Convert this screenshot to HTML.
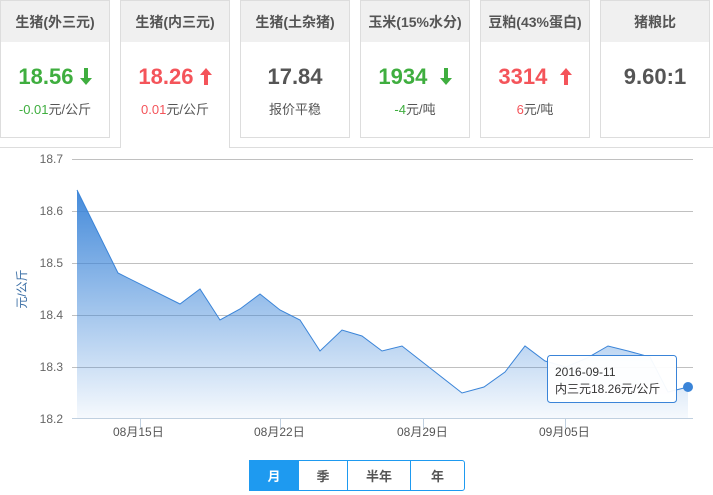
<!DOCTYPE html><html><head><meta charset="utf-8"><style>
body{margin:0;width:713px;height:495px;background:#fff;font-family:"Liberation Sans","Noto Sans CJK SC",sans-serif;position:relative;overflow:hidden}
.t{position:absolute;top:0;width:108px;height:136px;border:1px solid #ddd;background:#fff;text-align:center}
.t .h{height:41px;background:#f0f0f0;line-height:42px;font-size:14px;font-weight:bold;color:#555}
.t .v{margin-top:21px;font-size:22px;font-weight:bold;color:#555;height:28px;line-height:28px}
.t .s{margin-top:8px;font-size:13px;color:#555}
.t .g{color:#3fae3f}.t .r{color:#f4545a}
.act{height:147px;border-bottom:none}
.line{position:absolute;top:147px;height:1px;background:#ddd}
.btn{position:absolute;top:460px;height:31px;line-height:31px;text-align:center;font-size:13px;font-weight:bold;color:#555;border:1px solid #1e9af0;box-sizing:border-box}
svg.ar{vertical-align:-1px}
</style></head><body>
<div class="line" style="left:0;width:121px"></div><div class="line" style="left:229px;width:484px"></div>
<div class="t" style="left:0"><div class="h">生猪(外三元)</div><div class="v g">18.56 <svg class="ar" width="12" height="17" viewBox="0 0 12 17"><path d="M4 0h4v10h4L6 17 0 10h4z" fill="#3fae3f"/></svg></div><div class="s"><span class="g">-0.01</span>元/公斤</div></div>
<div class="t act" style="left:120px"><div class="h">生猪(内三元)</div><div class="v r">18.26 <svg class="ar" width="12" height="17" viewBox="0 0 12 17"><path d="M4 17h4V7h4L6 0 0 7h4z" fill="#f4545a"/></svg></div><div class="s"><span class="r">0.01</span>元/公斤</div></div>
<div class="t" style="left:240px"><div class="h">生猪(土杂猪)</div><div class="v">17.84</div><div class="s">报价平稳</div></div>
<div class="t" style="left:360px"><div class="h">玉米(15%水分)</div><div class="v g">1934 &nbsp;<svg class="ar" width="12" height="17" viewBox="0 0 12 17"><path d="M4 0h4v10h4L6 17 0 10h4z" fill="#3fae3f"/></svg></div><div class="s"><span class="g">-4</span>元/吨</div></div>
<div class="t" style="left:480px"><div class="h">豆粕(43%蛋白)</div><div class="v r">3314 &nbsp;<svg class="ar" width="12" height="17" viewBox="0 0 12 17"><path d="M4 17h4V7h4L6 0 0 7h4z" fill="#f4545a"/></svg></div><div class="s"><span class="r">6</span>元/吨</div></div>
<div class="t" style="left:600px"><div class="h">猪粮比</div><div class="v">9.60:1</div></div>
<svg width="713" height="495" style="position:absolute;left:0;top:0" font-family="Liberation Sans,Noto Sans CJK SC,sans-serif">
<defs><linearGradient id="a" x1="0" y1="0" x2="0" y2="1"><stop offset="0" stop-color="#3a84d8"/><stop offset="1" stop-color="#3a84d8" stop-opacity="0.05"/></linearGradient></defs>
<g stroke="#c0c0c0" stroke-width="1">
<line x1="72" y1="159.5" x2="693" y2="159.5"/><line x1="72" y1="211.5" x2="693" y2="211.5"/><line x1="72" y1="263.5" x2="693" y2="263.5"/><line x1="72" y1="315.5" x2="693" y2="315.5"/><line x1="72" y1="367.5" x2="693" y2="367.5"/></g>
<line x1="72" y1="418.5" x2="693" y2="418.5" stroke="#c0d0e0"/>
<g stroke="#c0d0e0"><line x1="140.5" y1="419" x2="140.5" y2="428"/><line x1="280.5" y1="419" x2="280.5" y2="428"/><line x1="423.5" y1="419" x2="423.5" y2="428"/><line x1="565.5" y1="419" x2="565.5" y2="428"/></g>
<g font-size="12" fill="#666" text-anchor="end"><text x="63" y="163">18.7</text><text x="63" y="215">18.6</text><text x="63" y="267">18.5</text><text x="63" y="319">18.4</text><text x="63" y="371">18.3</text><text x="63" y="423">18.2</text></g>
<text transform="translate(26,289) rotate(-90)" font-size="12" fill="#3a6ea5" text-anchor="middle">元/公斤</text>
<g font-size="12" fill="#555"><text x="113" y="436">08月15日</text><text x="254" y="436">08月22日</text><text x="397" y="436">08月29日</text><text x="539" y="436">09月05日</text></g>
<path d="M77,190 L118,273 L180,304 L200,289 L220,320 L240,309 L260,294 L280,310 L300,320 L320,351 L342,330 L362,336 L382,351 L402,346 L462,393 L484,387 L505,372 L525,346 L545,361 L566,367 L587,358 L608,346 L628,351 L650,357 L668,392 L688,387 L688,418 L77,418 Z" fill="url(#a)" opacity="0.95"/>
<path d="M77,190 L118,273 L180,304 L200,289 L220,320 L240,309 L260,294 L280,310 L300,320 L320,351 L342,330 L362,336 L382,351 L402,346 L462,393 L484,387 L505,372 L525,346 L545,361 L566,367 L587,358 L608,346 L628,351 L650,357 L668,392 L688,387" fill="none" stroke="#3a84d8" stroke-width="1"/>
<circle cx="688" cy="387" r="5" fill="#3a84d8"/>
<rect x="547.5" y="355.5" width="129" height="47" rx="3" fill="#fff" fill-opacity="0.95" stroke="#3a84d8"/>
<text x="555" y="376" font-size="12" fill="#333">2016-09-11</text><text x="555" y="393" font-size="12" fill="#333">内三元18.26元/公斤</text>
</svg>
<div class="btn" style="left:249px;width:50px;background:#1e9af0;color:#fff">月</div>
<div class="btn" style="left:298px;width:50px">季</div>
<div class="btn" style="left:347px;width:64px">半年</div>
<div class="btn" style="left:410px;width:55px;border-radius:0 3px 3px 0">年</div>
</body></html>
